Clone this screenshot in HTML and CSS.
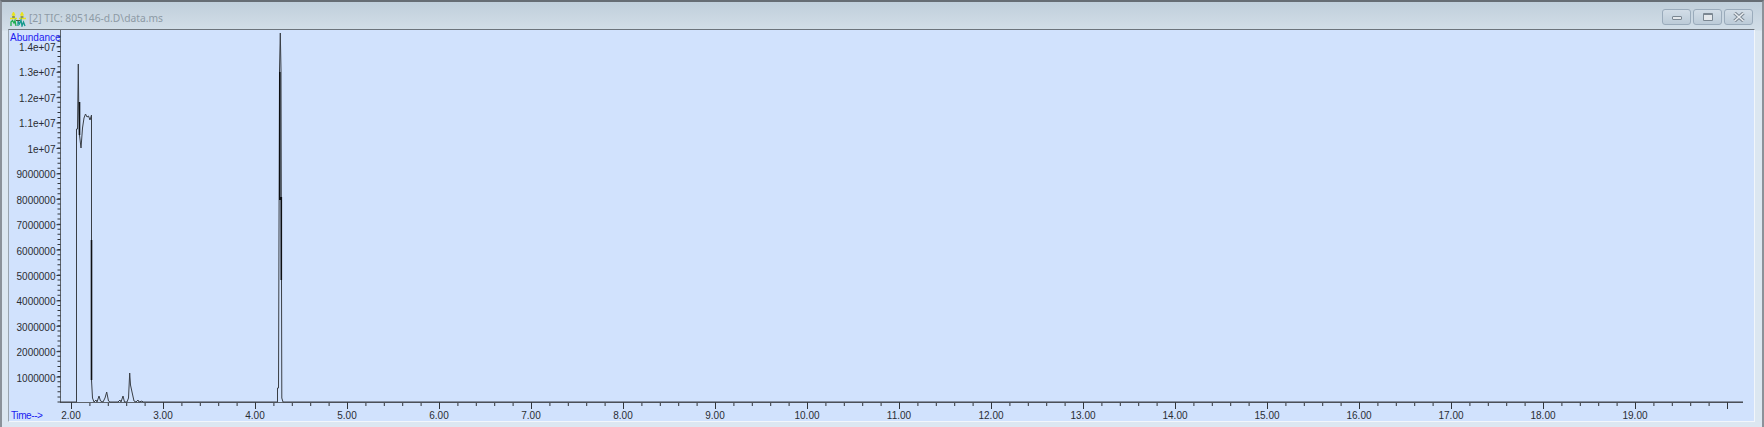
FILE: index.html
```html
<!DOCTYPE html>
<html lang="en">
<head>
<meta charset="utf-8">
<title>TIC: 805146-d.D\data.ms</title>
<link rel="stylesheet" href="styles.css">
</head>
<body>
<div class="window">
  <header class="titlebar">
    <svg class="app-icon" viewBox="0 0 16 15" width="16" height="15">
      <path class="i-yellow" d="M0 6.500H7M9 6.500H16M3.500 6V1M2 3.500L3.500 .5 5 3.500M12 6V1M10.500 3.500L12 .5 13.500 3.500"/>
      <path class="i-dark" d="M6 8.500H10M2 5H5M10.500 5H13.500"/>
      <path class="i-green" d="M1 14V10L2.500 8.500 4 11 5 8.500 6 14"/>
      <path class="i-teal" d="M8 14V9L9.500 12 11 8 12 14 13.500 10 15 14"/>
    </svg>
    <span class="title">[2] TIC: 805146-d.D\data.ms</span>
    <div class="controls">
      <button class="ctl" aria-label="Minimize"><span class="g-min"></span></button>
      <button class="ctl" aria-label="Restore"><span class="g-max"></span></button>
      <button class="ctl" aria-label="Close">
        <svg viewBox="0 0 12 10" width="12" height="10">
          <path class="g-close-edge" d="M1.500 1l9 8M10.500 1l-9 8"/>
          <path class="g-close" d="M1.500 1l9 8M10.500 1l-9 8"/>
        </svg>
      </button>
    </div>
  </header>
  <main class="client">
    <svg class="chart" viewBox="9 30 1745 391" width="1745" height="391">
      <g class="axis">
        <path d="M60.5 30V403M60 402.5H1743"/>
      </g>
      <g class="ticks">
        <line class="minor-y" x1="59" y1="402.5" x2="59" y2="33"/>
        <path d="M56.500 46.900h4M56.500 72.300h4M56.500 97.700h4M56.500 123.100h4M56.500 148.500h4M56.500 173.900h4M56.500 199.300h4M56.500 224.700h4M56.500 250.100h4M56.500 275.500h4M56.500 300.900h4M56.500 326.300h4M56.500 351.700h4M56.500 377.100h4"/>
        <line class="minor-x" x1="71" y1="404.500" x2="1730" y2="404.500"/>
        <path d="M71.500 402v7M163.500 402v7M255.500 402v7M347.500 402v7M439.500 402v7M531.500 402v7M623.500 402v7M715.500 402v7M807.500 402v7M899.500 402v7M991.500 402v7M1083.500 402v7M1175.500 402v7M1267.500 402v7M1359.500 402v7M1451.500 402v7M1543.500 402v7M1635.500 402v7M1727.500 402v7"/>
      </g>
      <g class="ylabels">
        <text x="55.500" y="50.500">1.4e+07</text>
        <text x="55.500" y="75.500">1.3e+07</text>
        <text x="55.500" y="101.500">1.2e+07</text>
        <text x="55.500" y="126.500">1.1e+07</text>
        <text x="55.500" y="152.500">1e+07</text>
        <text x="55.500" y="177.500">9000000</text>
        <text x="55.500" y="203.500">8000000</text>
        <text x="55.500" y="228.500">7000000</text>
        <text x="55.500" y="254.500">6000000</text>
        <text x="55.500" y="279.500">5000000</text>
        <text x="55.500" y="304.500">4000000</text>
        <text x="55.500" y="330.500">3000000</text>
        <text x="55.500" y="355.500">2000000</text>
        <text x="55.500" y="381.500">1000000</text>
      </g>
      <g class="xlabels">
        <text x="71" y="419">2.00</text>
        <text x="163" y="419">3.00</text>
        <text x="255" y="419">4.00</text>
        <text x="347" y="419">5.00</text>
        <text x="439" y="419">6.00</text>
        <text x="531" y="419">7.00</text>
        <text x="623" y="419">8.00</text>
        <text x="715" y="419">9.00</text>
        <text x="807" y="419">10.00</text>
        <text x="899" y="419">11.00</text>
        <text x="991" y="419">12.00</text>
        <text x="1083" y="419">13.00</text>
        <text x="1175" y="419">14.00</text>
        <text x="1267" y="419">15.00</text>
        <text x="1359" y="419">16.00</text>
        <text x="1451" y="419">17.00</text>
        <text x="1543" y="419">18.00</text>
        <text x="1635" y="419">19.00</text>
      </g>
      <text class="axis-name" x="10" y="41">Abundance</text>
      <text class="axis-name time" x="11" y="419">Time--&gt;</text>
      <path class="trace" d="M60 402H76.500V129H77.500L78.300 64 78.700 102 79.500 135 81 148 82.500 128 84 118 85.500 114 87 117 88.500 116 90 120 91.500 115V380L92.500 398 94 402 96 400 97 402 99 396 100.500 401 103 402 105 398 106.700 392 108.500 401 110 402H118L120 400 121 402 123 396 124.500 402H127L128.500 398 129.700 373 130.500 385 132 392 134 401 136 402 138 400 139 402 142 401 143 402H277.500V388H278.500L279.500 70 280.300 33 281 70 281.800 398 283 402H1743"/>
      <path class="trace-heavy" d="M79.500 102V135M91.500 240V380M279.800 72V200M281.300 197V280"/>
    </svg>
  </main>
</div>
</body>
</html>
```
FILE: styles.css
```css
* { box-sizing: border-box; }
html, body { margin: 0; padding: 0; background: #dce7f1; }
body { width: 1764px; height: 427px; overflow: hidden; font-family: "Liberation Sans", Arial, sans-serif; }

.window {
  display: flex;
  flex-direction: column;
  width: 1764px;
  height: 427px;
  padding: 0 2px 0 2px;
  border-top: 2px solid #666d74;
  border-left: 2px solid #8b929a;
  border-right: 2px solid #8b929a;
  background: linear-gradient(#c0cfdb 0, #d2deE8 28px, #dce7f1 29px);
}

.titlebar {
  display: flex;
  align-items: center;
  flex: 0 0 27px;
  padding: 0 7px 0 6px;
}
.app-icon { flex: none; margin-top: 7px; }
.i-yellow, .i-green, .i-teal, .i-dark { fill: none; stroke-width: 1.3; }
.i-yellow { stroke: #e8e41e; }
.i-green { stroke: #1fae4e; }
.i-teal { stroke: #149a8e; }
.i-dark { stroke: #4a5a3c; stroke-width: 1; }
.title {
  margin-left: 3px;
  margin-top: 4px;
  font: 10.25px "Noto Sans", "Open Sans", sans-serif;
  color: #8d9aa5;
  white-space: nowrap;
}
.controls { display: flex; gap: 2px; margin-left: auto; margin-top: 3px; }
.ctl {
  display: flex;
  align-items: center;
  justify-content: center;
  width: 29px;
  height: 16px;
  padding: 0;
  border: 1px solid #9aabbb;
  border-radius: 3px;
  background: linear-gradient(#d2dde7, #bccbd8);
}
.g-min {
  display: block;
  width: 10px;
  height: 4px;
  margin-top: 2px;
  background: #e4e8ec;
  border: 1px solid #7b8792;
  border-radius: 1px;
}
.g-max {
  display: block;
  width: 10px;
  height: 8px;
  background: #e4e8ec;
  border: 1px solid #7b8792;
  border-top-width: 2px;
  border-radius: 1px;
}
.g-close-edge { fill: none; stroke: #7b8792; stroke-width: 3.5; }
.g-close { fill: none; stroke: #e8ecf0; stroke-width: 1.6; }

.client {
  flex: 0 0 392px;
  width: 1747px;
  margin-left: 4px;
  background: #d1e2fd;
  border-top: 1px solid #6c747c;
  border-left: 1px solid #9aa5b0;
  border-right: 1px solid #f2f6fb;
  border-bottom: 1px solid #f2f6fb;
}
.chart { display: block; }

.axis path { fill: none; stroke: #5d636b; stroke-width: 1; }
.ticks path, .ticks line { fill: none; stroke: #30343a; stroke-width: 1; }
.ticks .minor-y { stroke-width: 3; stroke-dasharray: 1 4.08; }
.ticks .minor-x { stroke-width: 3; stroke-dasharray: 1 17.4; }

.ylabels text, .xlabels text { font: 10px "Liberation Sans", Arial, sans-serif; fill: #2a2d33; }
.ylabels text { text-anchor: end; }
.xlabels text { text-anchor: middle; }
.axis-name { font: 10px "Liberation Sans", Arial, sans-serif; fill: #1c1cf0; }
.time { letter-spacing: -0.4px; }

.trace { fill: none; stroke: #3a3f46; stroke-width: 1; }
.trace-heavy { fill: none; stroke: #0d0f12; stroke-width: 1.6; }
```
